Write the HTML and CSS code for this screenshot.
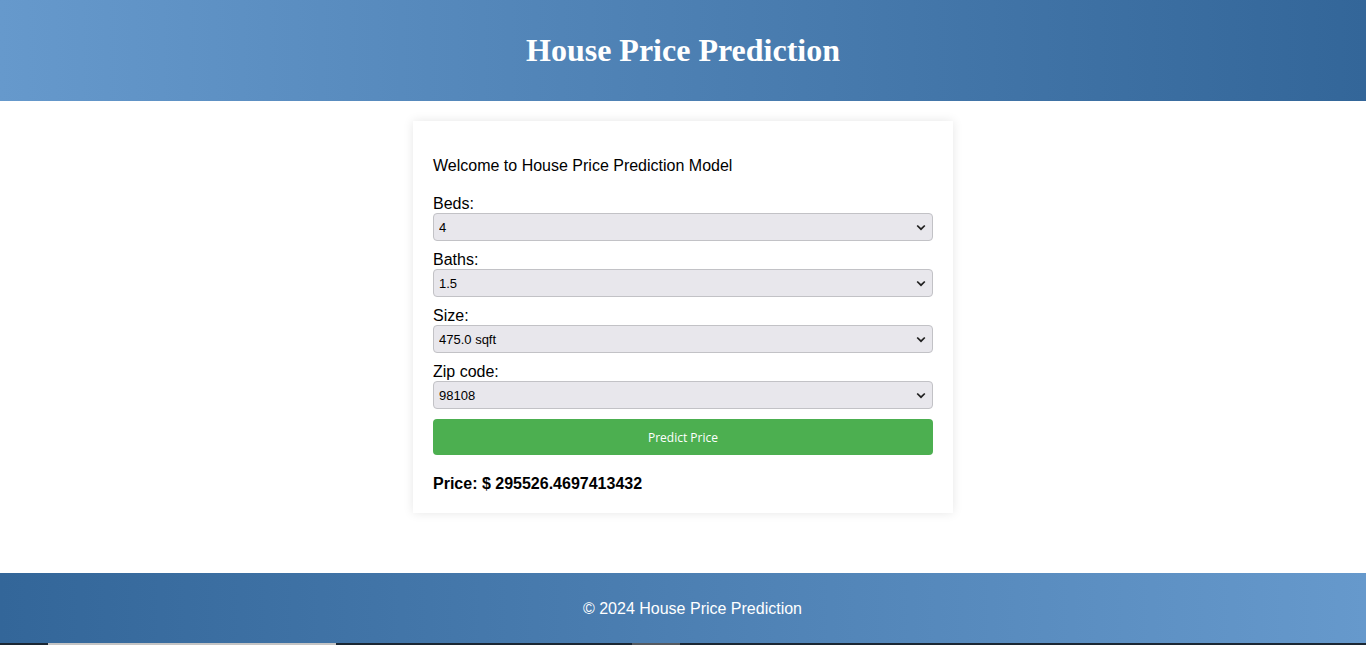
FILE: index.html
```html
<!DOCTYPE html>
<html lang="en">
<head>
<meta charset="utf-8">
<title>House Price Prediction</title>
<link rel="stylesheet" href="styles.css">
</head>
<body>
<header class="site-header">
  <h1 class="site-title">House Price Prediction</h1>
</header>
<main class="main">
  <div class="card">
    <p class="welcome">Welcome to House Price Prediction Model</p>
    <form class="form">
      <label class="field-label" for="beds">Beds:</label>
      <select class="field-select" id="beds"><option>4</option></select>
      <label class="field-label" for="baths">Baths:</label>
      <select class="field-select" id="baths"><option>1.5</option></select>
      <label class="field-label" for="size">Size:</label>
      <select class="field-select" id="size"><option>475.0 sqft</option></select>
      <label class="field-label" for="zip">Zip code:</label>
      <select class="field-select" id="zip"><option>98108</option></select>
      <button type="button" class="predict-btn">Predict Price</button>
    </form>
    <div class="price">Price: $ 295526.4697413432</div>
  </div>
</main>
<footer class="site-footer">
  <p class="footer-text">© 2024 House Price Prediction</p>
</footer>
<div class="bottom-strip">
  <span class="strip-seg strip-light"></span>
  <span class="strip-seg strip-mid"></span>
</div>
</body>
</html>
```

FILE: styles.css
```css
* { box-sizing: border-box; }
html, body { margin: 0; padding: 0; }
body {
  font-family: "Liberation Sans", Arial, sans-serif;
  color: #000;
  background: #fff;
}
.site-header {
  height: 101px;
  background: linear-gradient(to right, #6699cc, #336699);
  display: flex;
  align-items: center;
  justify-content: center;
}
.site-title {
  margin: 0;
  font-family: "Liberation Serif", "Times New Roman", serif;
  font-weight: bold;
  font-size: 32px;
  color: #fff;
}
.main {
  padding: 20px 0 60px;
}
.card {
  width: 540px;
  margin: 0 auto;
  padding: 20px;
  background: #fff;
  box-shadow: 0 0 10px rgba(0, 0, 0, 0.1);
}
.welcome {
  margin: 16px 0 20px;
  font-size: 16px;
  line-height: 18px;
}
.form {
  display: flex;
  flex-direction: column;
}
.field-label {
  display: block;
  font-size: 16px;
  line-height: 18px;
}
.field-select {
  -webkit-appearance: none;
  appearance: none;
  height: 28px;
  margin: 0 0 10px;
  padding: 0 24px 0 5px;
  font-family: "Liberation Sans", Arial, sans-serif;
  font-size: 13px;
  color: #000;
  background-color: #e8e7ec;
  background-image: url("data:image/svg+xml,%3Csvg xmlns='http://www.w3.org/2000/svg' width='10' height='7' viewBox='0 0 10 7'%3E%3Cpath d='M1.2 1.5 L5 5.2 L8.8 1.5' fill='none' stroke='%23202020' stroke-width='1.7'/%3E%3C/svg%3E");
  background-repeat: no-repeat;
  background-position: right 6px center;
  background-size: 10px 7px;
  border: 1px solid #c2c2c6;
  border-radius: 4px;
}
.predict-btn {
  height: 36px;
  margin: 0;
  border: none;
  border-radius: 4px;
  background: #4caf50;
  color: #fff;
  font-family: "Open Sans", "Noto Sans", sans-serif;
  font-size: 12px;
}
.price {
  margin-top: 20px;
  font-size: 16px;
  font-weight: bold;
  line-height: 18px;
}
.site-footer {
  height: 70px;
  padding: 1px 0 0 19px;
  background: linear-gradient(to right, #336699, #6699cc);
  display: flex;
  align-items: center;
  justify-content: center;
}
.footer-text {
  margin: 0;
  color: #fff;
  font-size: 16px;
}
.bottom-strip {
  height: 2px;
  background: #1b2733;
  display: flex;
}
.strip-seg { display: block; height: 2px; }
.strip-light { width: 288px; margin-left: 48px; background: #c4c4c4; }
.strip-mid { width: 48px; margin-left: 296px; background: #555a60; }
```
